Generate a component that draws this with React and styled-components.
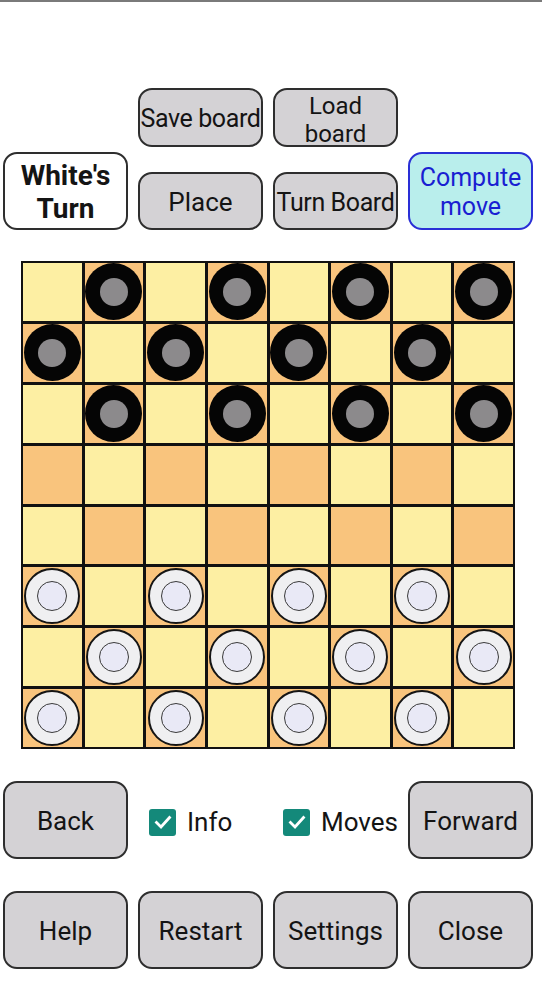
import React from "react";
import styled, { createGlobalStyle } from "styled-components";

const Global = createGlobalStyle`
  html, body { margin: 0; padding: 0; background: #fff; }
  body { font-family: Roboto, "Noto Sans", "Liberation Sans", sans-serif; color: #111; }
`;

const Page = styled.div`
  width: 542px;
  min-height: 1000px;
  background: #fff;
  border-top: 2px solid #7a7a7a;
  box-sizing: border-box;
  display: flex;
  flex-direction: column;
`;

const TopGrid = styled.div`
  display: grid;
  grid-template-columns: repeat(4, 125px);
  grid-template-rows: 59px 78px;
  column-gap: 10px;
  row-gap: 5px;
  align-items: end;
  padding: 86px 0 0 3px;
`;

const Button = styled.div`
  box-sizing: border-box;
  height: ${(p) => p.$h || 58}px;
  padding-top: ${(p) => p.$pt ?? 4}px;
  border: 2px solid #2e2e2e;
  border-radius: 14px;
  background: ${(p) => (p.$accent ? "#b9eeec" : p.$white ? "#fff" : "#d4d2d5")};
  border-color: ${(p) => (p.$accent ? "#2a2fd6" : "#2e2e2e")};
  color: ${(p) => (p.$accent ? "#1a1ed2" : "#141414")};
  font-size: ${(p) => p.$fs || 26}px;
  font-weight: ${(p) => (p.$bold ? 700 : 400)};
  line-height: ${(p) => p.$lh || "1.15"};
  display: flex;
  align-items: center;
  justify-content: center;
  text-align: center;
  white-space: nowrap;
  overflow: hidden;
  letter-spacing: ${(p) => p.$ls || 0}px;
`;

const Spacer = styled.div``;

const BoardWrap = styled.div`
  padding: 31px 0 0 21px;
`;

const Board = styled.div`
  width: 494px;
  height: 488px;
  box-sizing: border-box;
  background: #111;
  border: 2px solid #111;
  display: grid;
  grid-template-columns: repeat(8, 1fr);
  grid-template-rows: repeat(8, 1fr);
  gap: 3px;
`;

const Cell = styled.div`
  background: ${(p) => (p.$dark ? "#f9c47d" : "#fdefa3")};
  display: flex;
  align-items: center;
  justify-content: center;
`;

const BlackPiece = styled.div`
  width: 57px;
  height: 57px;
  border-radius: 50%;
  background: #050505;
  display: flex;
  align-items: center;
  justify-content: center;
  flex-shrink: 0;
`;

const BlackCore = styled.div`
  width: 28px;
  height: 28px;
  border-radius: 50%;
  background: #8c8a8c;
`;

const WhitePiece = styled.div`
  box-sizing: border-box;
  width: 56px;
  height: 56px;
  border-radius: 50%;
  background: #efeff1;
  border: 2px solid #151515;
  display: flex;
  align-items: center;
  justify-content: center;
  flex-shrink: 0;
`;

const WhiteCore = styled.div`
  box-sizing: border-box;
  width: 30px;
  height: 30px;
  border-radius: 50%;
  background: #e9e9f6;
  border: 1.5px solid #3a3a3a;
`;

const ControlGrid = styled.div`
  display: grid;
  grid-template-columns: repeat(4, 125px);
  column-gap: 10px;
  align-items: center;
  padding: 32px 0 0 3px;
`;

const BottomGrid = styled(ControlGrid)`
  padding-top: 32px;
`;

const Check = styled.label`
  display: flex;
  align-items: center;
  gap: 11px;
  padding-left: ${(p) => p.$pl}px;
  padding-top: 4px;
  font-size: 26px;
  color: #141414;
`;

const Box = styled.span`
  width: 27px;
  height: 27px;
  border-radius: 3px;
  background: #14897a;
  display: flex;
  align-items: center;
  justify-content: center;
  flex-shrink: 0;
`;

const CheckMark = () => (
  <svg width="20" height="20" viewBox="0 0 20 20">
    <polyline points="3.5,10.5 8,15 16.5,5.5" fill="none" stroke="#fff" strokeWidth="2.8" strokeLinecap="square" />
  </svg>
);

function Piece({ r, c }) {
  const dark = (r + c) % 2 === 1;
  if (!dark) return null;
  if (r <= 2)
    return (
      <BlackPiece>
        <BlackCore />
      </BlackPiece>
    );
  if (r >= 5)
    return (
      <WhitePiece>
        <WhiteCore />
      </WhitePiece>
    );
  return null;
}

export default function App() {
  const cells = [];
  for (let r = 0; r < 8; r++) {
    for (let c = 0; c < 8; c++) {
      cells.push(
        <Cell key={`${r}-${c}`} $dark={(r + c) % 2 === 1}>
          <Piece r={r} c={c} />
        </Cell>
      );
    }
  }
  return (
    <>
      <Global />
      <Page>
        <TopGrid>
          <Spacer />
          <Button $h={59} $fs={25} $ls={-0.4}>Save board</Button>
          <Button $h={59} $fs={24} $lh="28px" $pt={5}>
            Load
            <br />
            board
          </Button>
          <Spacer />
          <Button $h={78} $white $bold $fs={28} $lh="33px" $pt={2}>
            White's
            <br />
            Turn
          </Button>
          <Button>Place</Button>
          <Button $fs={25} $ls={-0.4}>Turn Board</Button>
          <Button $h={78} $accent $fs={25} $lh="29px" $pt={2}>
            Compute
            <br />
            move
          </Button>
        </TopGrid>
        <BoardWrap>
          <Board>{cells}</Board>
        </BoardWrap>
        <ControlGrid>
          <Button $h={78}>Back</Button>
          <Check $pl={11}>
            <Box>
              <CheckMark />
            </Box>
            Info
          </Check>
          <Check $pl={10}>
            <Box>
              <CheckMark />
            </Box>
            Moves
          </Check>
          <Button $h={78}>Forward</Button>
        </ControlGrid>
        <BottomGrid>
          <Button $h={78}>Help</Button>
          <Button $h={78}>Restart</Button>
          <Button $h={78}>Settings</Button>
          <Button $h={78}>Close</Button>
        </BottomGrid>
      </Page>
    </>
  );
}
